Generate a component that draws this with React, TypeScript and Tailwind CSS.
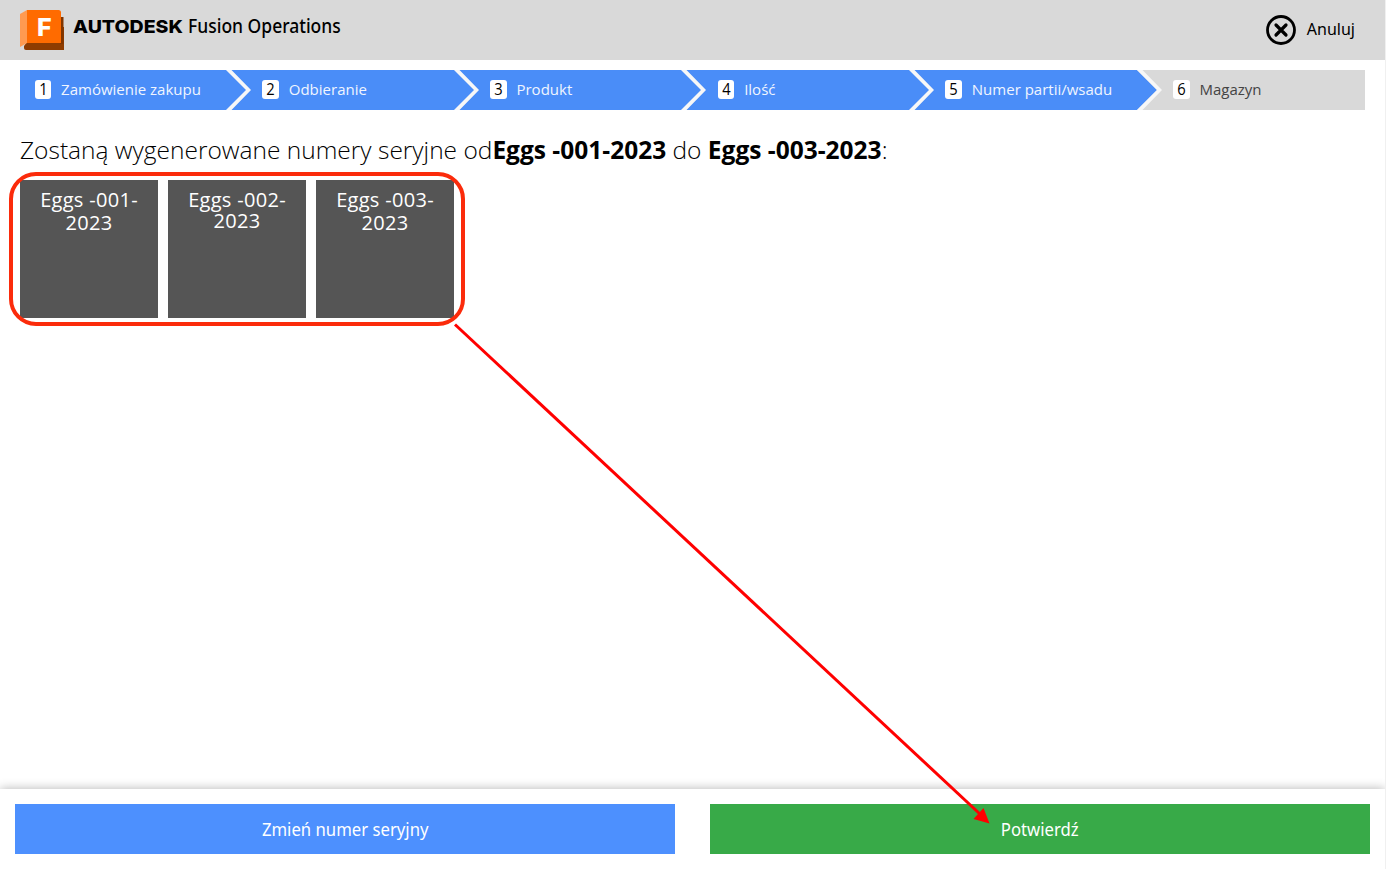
const steps = ['Zamówienie zakupu', 'Odbieranie', 'Produkt', 'Ilość', 'Numer partii/wsadu', 'Magazyn'];

const serials = [
  { number: 'Eggs -001-', year: '2023', spacing: 'pt-[8px] leading-[23px]' },
  { number: 'Eggs -002-', year: '2023', spacing: 'pt-[9px] leading-[21px]' },
  { number: 'Eggs -003-', year: '2023', spacing: 'pt-[8px] leading-[23px]' },
];

function FusionLogo() {
  return (
    <svg width="44" height="41" viewBox="0 0 44 41" className="block shrink-0">
      <path d="M4 36 L7 32 L40 17 H44 V40 H6 Q4 40 4 38Z" fill="#8f3c00" />
      <path d="M40 7 H43.500 V34 H40Z" fill="#803500" />
      <path d="M0 4 L7 0 V33 L0 37Z" fill="#ff9a50" />
      <path d="M7 0 H38.500 Q41 0 41 2.500 V33 H7Z" fill="#ff6b00" />
    </svg>
  );
}

function Chevron({ last }: { last: boolean }) {
  return (
    <svg width="27" height="40" viewBox="0 0 27 40" className="absolute top-0 left-[206px] z-10">
      <path d="M0 0 H27 V40 H0Z" fill={last ? '#d9d9d9' : '#4a8df8'} />
      <path d="M0 0 L20 20 L0 40Z" fill="#4a8df8" />
      <path d="M0 0 H5.500 L25 20 L5.500 40 H0 L20 20Z" fill="#f7f7f7" />
    </svg>
  );
}

export default function App() {
  return (
    <div className="relative flex h-[869px] w-[1386px] flex-col overflow-hidden border-r border-[#f0f0f0] bg-white font-['Open_Sans',sans-serif] text-black">
      <header className="flex h-[60px] shrink-0 justify-between bg-[#d9d9d9] pl-5 pr-[30px]">
        <div className="flex pt-[10px]">
          <div className="relative">
            <FusionLogo />
            <span className="absolute top-[3px] left-[17px] font-[Inter,sans-serif] text-[25px] leading-[28px] font-extrabold text-white">F</span>
          </div>
          <div className="flex pl-[9px] leading-[34px]">
            <span className="w-[114.500px] origin-left scale-x-[1.085] font-[Inter,sans-serif] text-[18px] font-extrabold whitespace-nowrap">AUTODESK</span>
            <span className="-mt-px origin-left scale-x-[0.920] font-['Noto_Sans',sans-serif] text-[19px] font-medium whitespace-nowrap">Fusion Operations</span>
          </div>
        </div>
        <button className="flex items-center gap-[10.500px]">
          <svg width="30" height="30" viewBox="0 0 30 30" fill="none" stroke="#000" strokeLinecap="round">
            <circle cx="15" cy="15" r="13.500" strokeWidth="2.800" />
            <path d="M10 10 L20 20 M20 10 L10 20" strokeWidth="3.200" />
          </svg>
          <span className="mb-[2px] font-['Noto_Sans',sans-serif] text-[16px] leading-6">Anuluj</span>
        </button>
      </header>

      <nav className="mx-5 mt-[10px] flex h-10 shrink-0">
        {steps.map((label, i) => {
          const last = i === steps.length - 1;
          return (
            <div
              key={label}
              className={`relative flex items-center pl-[14.700px] ${last ? 'flex-1 bg-[#d9d9d9] text-[#444]' : 'w-[227.700px] shrink-0 bg-[#4a8df8] text-[#f0f5ff]'}`}
            >
              <span className="mb-[1px] flex h-[19px] w-[16.500px] items-center justify-center rounded-[3px] bg-white text-[15.500px] leading-none font-medium text-black">
                <span className="scale-x-[0.95]">{i + 1}</span>
              </span>
              <span className="mb-[1px] ml-[9.900px] text-[15px] whitespace-nowrap">{label}</span>
              {!last && <Chevron last={i === 4} />}
            </div>
          );
        })}
      </nav>

      <main className="flex-1 px-5 pt-[20px]">
        <h1 className="h-[50px] text-[24.500px] leading-[39px] font-light whitespace-pre">
          Zostaną wygenerowane numery seryjne od<b className="font-bold">Eggs -001-2023</b> do <b className="font-bold">Eggs -003-2023</b>:
        </h1>
        <div className="flex gap-[10px]">
          {serials.map((s) => (
            <div key={s.number} className={`h-[138px] w-[138px] bg-[#555] text-center text-[20px] tracking-[0.3px] text-white ${s.spacing}`}>
              {s.number}
              <br />
              {s.year}
            </div>
          ))}
        </div>
      </main>

      <footer className="flex h-20 shrink-0 gap-[35px] bg-white px-[15px] pt-[15px] shadow-[0_0_10px_rgba(0,0,0,0.3)]">
        <button className="h-[50px] flex-1 bg-[#4d90fe] font-['Noto_Sans',sans-serif] text-[17.500px] text-white">
          <span className="inline-block scale-x-[0.955]">Zmień numer seryjny</span>
        </button>
        <button className="h-[50px] flex-1 bg-[#38aa48] font-['Noto_Sans',sans-serif] text-[17.500px] text-white">
          <span className="inline-block scale-x-[0.955]">Potwierdź</span>
        </button>
      </footer>

      <div className="absolute top-[171.500px] left-[9px] h-[154.500px] w-[456px] rounded-[27px] border-4 border-[#fb2b0b]" />
      <svg width="1386" height="869" className="pointer-events-none absolute inset-0">
        <path d="M455 324.500 L981 815" stroke="#ff0000" strokeWidth="3" />
        <path d="M989.500 823.500 L973.500 819 L983.500 808Z" fill="#ff0000" />
      </svg>
    </div>
  );
}
